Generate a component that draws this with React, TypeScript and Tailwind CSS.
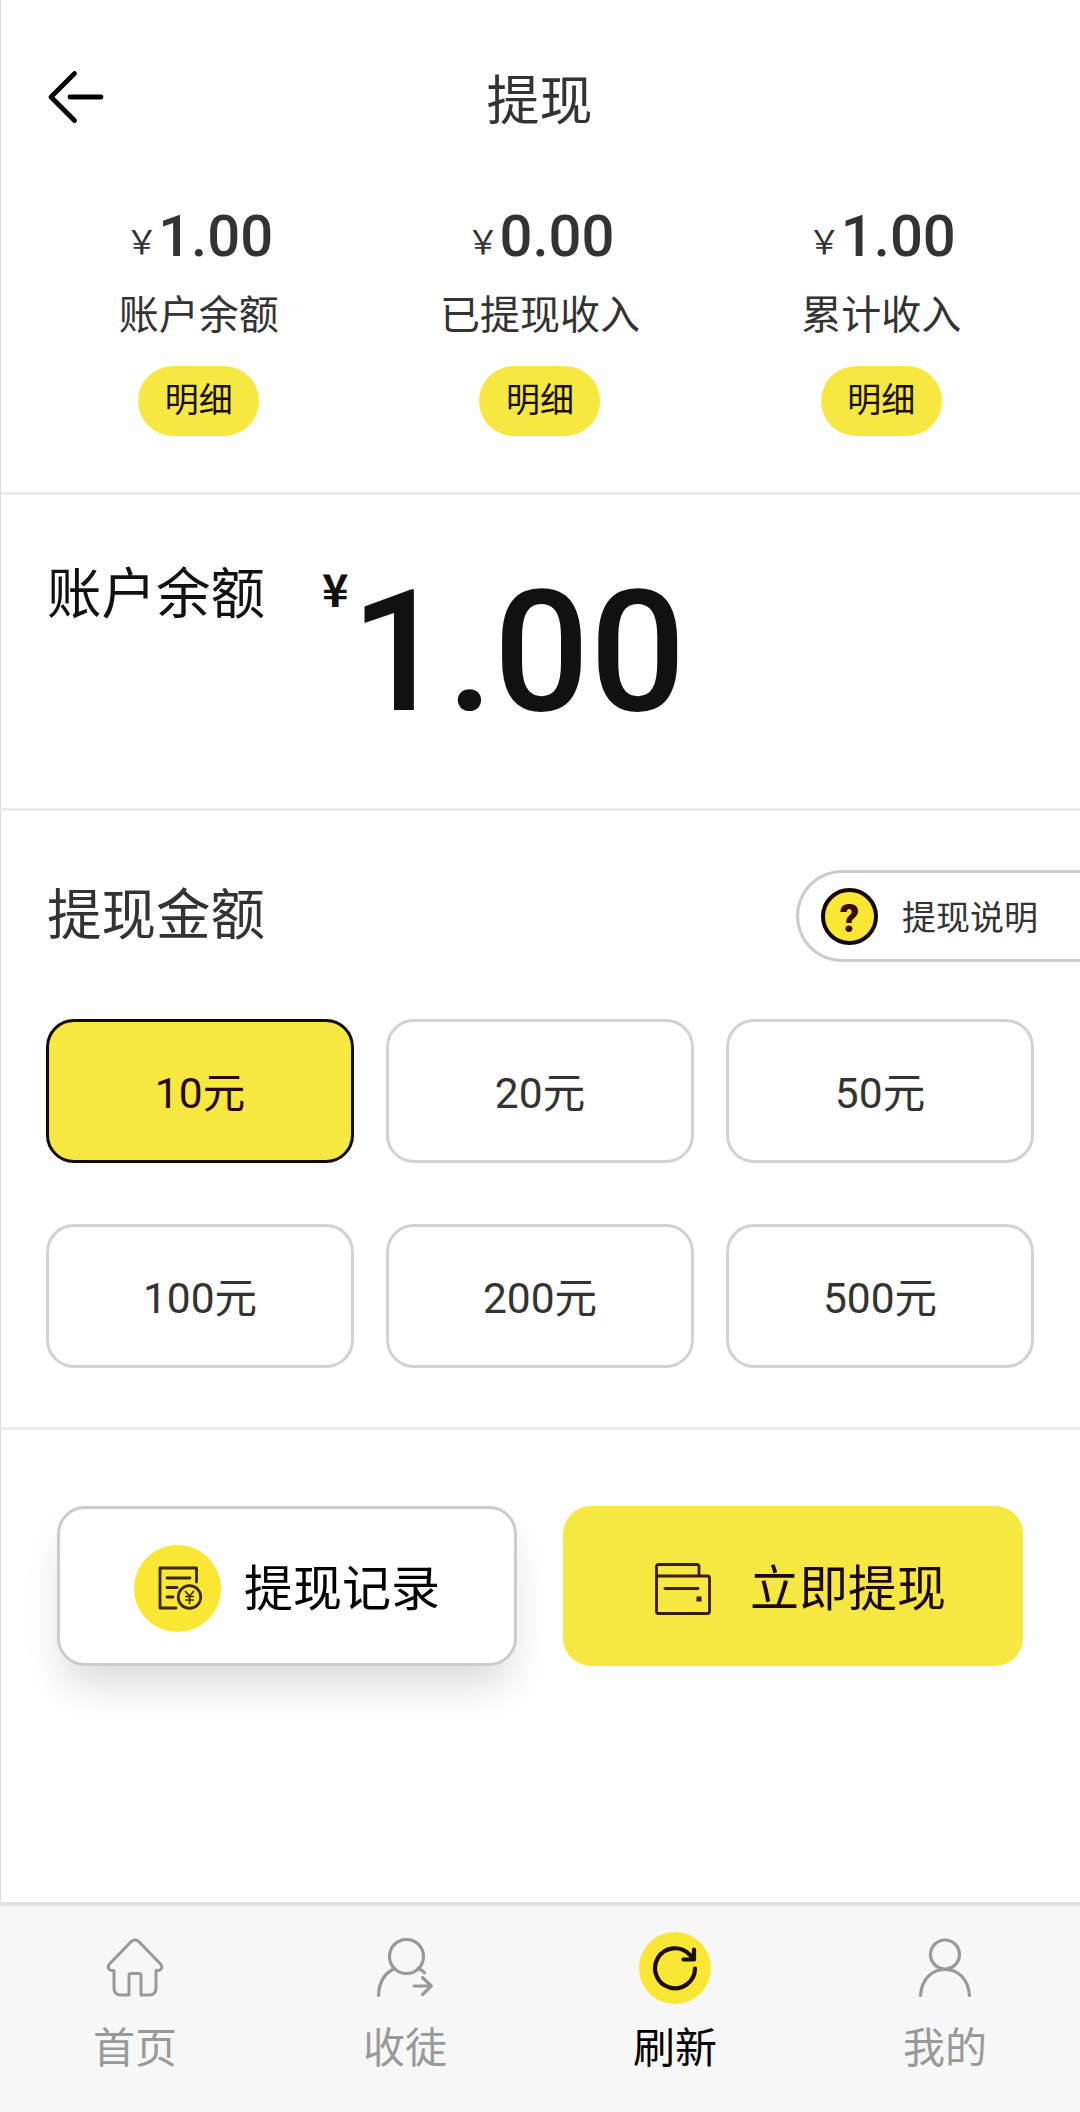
import { useState } from 'react';
import type { ReactNode } from 'react';

interface Stat {
  label: string;
  amount: string;
}

interface Tab {
  label: string;
  icon: ReactNode;
  active?: boolean;
}

const stats: Stat[] = [
  { label: '账户余额', amount: '1.00' },
  { label: '已提现收入', amount: '0.00' },
  { label: '累计收入', amount: '1.00' },
];

const amounts = [10, 20, 50, 100, 200, 500];

function BackIcon() {
  return (
    <svg width="58" height="56" viewBox="0 0 58 56" fill="none" stroke="#000" strokeWidth="4.8" strokeLinecap="round" strokeLinejoin="round">
      <path d="M28.500 4.500 5 28l23.500 23.500" />
      <path d="M24 28h31" />
    </svg>
  );
}

function RecordIcon() {
  return (
    <svg width="44" height="44" viewBox="0 0 44 44" fill="none" stroke="#3a2605" strokeWidth="2.800" strokeLinecap="round" strokeLinejoin="round">
      <path d="M38.500 16V2H2v40h16" />
      <path d="M9 12h23M9 21.500h10M9 31h6" />
      <circle cx="31.500" cy="31" r="11.300" />
      <path d="m27.500 25.500 4 4.500 4-4.500M31.500 30v7.500M27.800 30.500h7.400M27.800 34h7.400" strokeWidth="1.700" />
    </svg>
  );
}

function WalletIcon() {
  return (
    <svg width="56" height="52" viewBox="0 0 56 52" fill="none" stroke="#3a1c05" strokeWidth="2.800" strokeLinecap="round" strokeLinejoin="round">
      <path d="M44 13V3.500a2 2 0 0 0-2-2H3.500a2 2 0 0 0-2 2v45a2 2 0 0 0 2 2h49a2 2 0 0 0 2-2V15a2 2 0 0 0-2-2h-51" />
      <path d="M10 25.500h33" />
      <rect x="41.500" y="33.500" width="5" height="5" fill="#3a1c05" stroke="none" />
    </svg>
  );
}

function HomeIcon() {
  return (
    <svg width="58" height="60" viewBox="0 0 58 60" fill="none" stroke="#999" strokeWidth="3" strokeLinecap="round" strokeLinejoin="round">
      <path d="M25 3.800a5.500 5.500 0 0 1 8 0L54.500 26c2.600 2.800 1 6.500-2.500 6.500h-2V50c0 4.500-2.500 7-7 7h-8V37.500a2 2 0 0 0-2-2h-8a2 2 0 0 0-2 2V57h-8c-4.500 0-7-2.500-7-7V32.500H6c-3.500 0-5.100-3.700-2.500-6.500z" />
    </svg>
  );
}

function InviteIcon() {
  return (
    <svg width="58" height="60" viewBox="0 0 58 60" fill="none" stroke="#999" strokeWidth="3.200" strokeLinecap="round" strokeLinejoin="round">
      <circle cx="30.500" cy="18.500" r="17" />
      <path d="M2.500 57.500C3 44 9 35 18.500 30.500M42 30.500c2.500.8 4.500 2 6.500 4" />
      <path d="M38 48h17M46.500 39.500l8.800 8.500-8.800 8.500" />
    </svg>
  );
}

function RefreshIcon() {
  return (
    <div className="flex h-[72px] w-[72px] items-center justify-center rounded-full bg-[#f9e734]">
      <svg width="46" height="46" viewBox="0 0 46 46" fill="none" stroke="#1d0c02" strokeWidth="4.200" strokeLinecap="round" strokeLinejoin="round">
        <path d="M43 23.500A20 20 0 1 1 37.500 9.500L41 13" />
        <path d="M42 4.500v10H31.500" />
      </svg>
    </div>
  );
}

function UserIcon() {
  return (
    <svg width="54" height="60" viewBox="0 0 54 60" fill="none" stroke="#999" strokeWidth="3.200" strokeLinecap="round">
      <circle cx="27" cy="16.500" r="14.500" />
      <path d="M2.500 57.500C3.500 41 14 31.500 27 31.500S50.500 41 51.500 57.500" />
    </svg>
  );
}

const tabs: Tab[] = [
  { label: '首页', icon: <HomeIcon /> },
  { label: '收徒', icon: <InviteIcon /> },
  { label: '刷新', icon: <RefreshIcon />, active: true },
  { label: '我的', icon: <UserIcon /> },
];

export default function App() {
  const [selected, setSelected] = useState(10);

  return (
    <div className="flex h-[2112px] w-[1080px] flex-col overflow-hidden bg-[#fefefe] font-[Roboto,'Noto_Sans_CJK_SC',sans-serif] text-[#333]">
      {/* 顶部标题和收入统计 */}
      <section className="h-[495px] border-b-3 border-l border-b-[#ececec] border-l-[#ddd]">
        <header className="grid h-[196px] grid-cols-[1fr_auto_1fr] items-center pl-[45px] pr-[47px]">
          <button type="button" className="mb-[3px] w-[58px]">
            <BackIcon />
          </button>
          <h1 className="pt-[8px] text-[53px] leading-none">提现</h1>
        </header>

        <div className="grid grid-cols-3 pl-[27px] pr-[28px]">
          {stats.map((stat) => (
            <div key={stat.label} className="flex flex-col items-center">
              <div className="flex h-[80px] items-start pl-px text-[58px] font-medium leading-[80px]">
                <span className="pt-[7px] text-[33px] font-normal">￥</span>
                {stat.amount}
              </div>
              <div className="mt-[11px] h-[58px] text-[40px] leading-[58px]">{stat.label}</div>
              <button type="button" className="mt-[21px] h-[70px] w-[121px] rounded-full bg-[#f6e741] pb-[3px] text-[34px] leading-none text-[#1a0d00]">
                明细
              </button>
            </div>
          ))}
        </div>
      </section>

      {/* 账户余额 */}
      <section className="flex h-[316px] items-start border-b-3 border-l border-b-[#ececec] border-l-[#ddd] pl-[46px] text-[#111]">
        <div className="mt-[62px] text-[54.500px] leading-[74px]">账户余额</div>
        <div className="ml-[57px] mt-[56px] font-['Noto_Sans_CJK_SC',sans-serif] text-[45px] font-bold leading-[74px]">¥</div>
        <div className="ml-[2px] mt-[58px] text-[169px] font-medium leading-[198px]">1.00</div>
      </section>

      {/* 提现金额 */}
      <section className="h-[619px] border-b-3 border-l border-b-[#ececec] border-l-[#ddd] pl-[45px] pt-[59px]">
        <div className="flex items-center justify-between">
          <h2 className="pb-[2px] pl-px text-[54.500px] leading-[74px]">提现金额</h2>
          <button type="button" className="flex h-[92px] w-[284px] items-center rounded-l-full border-3 border-r-0 border-[#ccc] pl-[22px] text-[34px] leading-none">
            <span className="mr-[24px] flex h-[57px] w-[57px] items-center justify-center rounded-full border-4 border-[#120800] bg-[#f9e734] pt-[5px] text-[38px] font-black text-[#3a0a00]">
              ?
            </span>
            <span className="pt-[3px]">提现说明</span>
          </button>
        </div>

        <div className="mt-[57px] grid w-[988px] grid-cols-3 gap-x-[32px] gap-y-[61px]">
          {amounts.map((value) => (
            <button
              key={value}
              type="button"
              onClick={() => setSelected(value)}
              className={`h-[144px] rounded-[28px] border-3 pt-[6px] text-[42.500px] leading-none ${
                value === selected ? 'border-[#120a00] bg-[#f6e741] text-[#2a0800]' : 'border-[#d2d2d2]'
              }`}
            >
              {value}元
            </button>
          ))}
        </div>
      </section>

      {/* 操作按钮 */}
      <section className="flex flex-1 items-start gap-[46px] border-l border-l-[#ddd] pl-[56px] pt-[76px] text-[49px] leading-none text-[#000]">
        <button
          type="button"
          className="flex h-[160px] w-[460px] items-center rounded-[28px] border-3 border-[#ccc] bg-white pl-[74px] pt-[4px] shadow-[0_25px_40px_-8px_rgba(0,0,0,0.15)]"
        >
          <span className="mr-[23px] flex h-[87px] w-[87px] items-center justify-center rounded-full bg-[#f9e734] pl-1">
            <RecordIcon />
          </span>
          <span className="pt-[2px]">提现记录</span>
        </button>
        <button type="button" className="flex h-[160px] w-[460px] items-center rounded-[28px] bg-[#f6e741] pl-[92px] pt-[6px] text-[#1a0800]">
          <span className="mr-[39px]">
            <WalletIcon />
          </span>
          <span className="pt-px">立即提现</span>
        </button>
      </section>

      {/* 底部导航 */}
      <nav className="grid h-[210px] grid-cols-4 border-t-4 border-[#e3e3e3] bg-[#f7f7f7]">
        {tabs.map((tab) => (
          <a key={tab.label} className={`flex flex-col items-center pt-[24px] ${tab.active ? 'text-black' : 'text-[#999]'}`}>
            <div className="flex h-[75px] items-center">{tab.icon}</div>
            <span className="mt-[16px] text-[42px] leading-[56px]">{tab.label}</span>
          </a>
        ))}
      </nav>
    </div>
  );
}
